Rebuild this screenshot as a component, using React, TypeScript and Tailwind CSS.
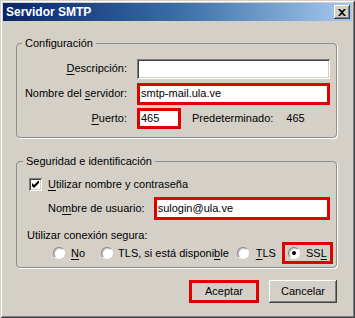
import React from "react";

const font = { fontFamily: '"Liberation Sans", Arial, sans-serif' };

// classic sunken / raised edges
const sunken = "shadow-[inset_1px_1px_0_#808080,inset_-1px_-1px_0_#ffffff,inset_2px_2px_0_#404040,inset_-2px_-2px_0_#d4d0c8]";
const raised = "shadow-[inset_-1px_-1px_0_#404040,inset_1px_1px_0_#ffffff,inset_-2px_-2px_0_#808080]";

function U({ children }: { children: React.ReactNode }) {
  return <span className="underline underline-offset-[2px]">{children}</span>;
}

function Radio({ checked }: { checked?: boolean }) {
  return (
    <span className="relative inline-block w-[12px] h-[12px] rounded-full bg-white border border-t-[#808080] border-l-[#808080] border-b-white border-r-white shadow-[inset_1px_1px_0_#c8c8c8]">
      {checked && <span className="absolute left-[3px] top-[3px] w-[4px] h-[4px] rounded-full bg-black" />}
    </span>
  );
}

function Field({ value, red, className }: { value?: string; red?: boolean; className?: string }) {
  return (
    <div
      className={
        "bg-white flex items-center text-[11px] text-black " +
        (red ? "border-[3px] border-[#e00000] pl-[1px] " : sunken + " pl-[4px] ") +
        (className ?? "")
      }
    >
      {value}
    </div>
  );
}

export default function App() {
  return (
    <div
      style={font}
      className="w-[355px] h-[318px] bg-[#d4d0c8] p-[3px] text-[11px] text-black leading-[13px] shadow-[inset_1px_1px_0_#d4d0c8,inset_-1px_-1px_0_#404040,inset_2px_2px_0_#ffffff,inset_-2px_-2px_0_#808080]"
    >
      {/* title bar */}
      <div className="h-[18px] flex items-center justify-between bg-gradient-to-r from-[#0a246a] via-[#3a6ea5] to-[#a6caf0] pl-[3px] pr-[2px]">
        <span className="text-white font-bold text-[12px]">Servidor SMTP</span>
        <div className={"w-[16px] h-[14px] bg-[#d4d0c8] flex items-center justify-center " + raised}>
          <svg width="8" height="7" viewBox="0 0 8 7">
            <path d="M0 0h2l2 2 2-2h2L5 3.5 8 7H6L4 5 2 7H0l3-3.5z" fill="#000" />
          </svg>
        </div>
      </div>

      <div className="flex flex-col pl-[13px] pt-[16px]">
        {/* Configuración */}
        <fieldset className="w-[321px] h-[101px] border border-[#8c8c8c] rounded-[4px] shadow-[1px_1px_0_#ffffff] pt-[8px] m-0">
          <legend className="ml-[5px] px-[3px]">Configuración</legend>
          <div className="flex flex-col gap-[4px]">
            <div className="flex items-center h-[21px]">
              <span className="w-[110px] text-right"><U>D</U>escripción:</span>
              <Field className="ml-[10px] w-[193px] h-[20px]" />
            </div>
            <div className="flex items-center h-[21px]">
              <span className="w-[110px] text-right">Nombre del <U>s</U>ervidor:</span>
              <Field red value="smtp-mail.ula.ve" className="ml-[10px] w-[193px] h-[22px]" />
            </div>
            <div className="flex items-center h-[21px]">
              <span className="w-[110px] text-right"><U>P</U>uerto:</span>
              <Field red value="465" className="ml-[10px] w-[44px] h-[21px]" />
              <span className="ml-[11px]">Predeterminado:</span>
              <span className="ml-[13px]">465</span>
            </div>
          </div>
        </fieldset>

        {/* Seguridad */}
        <fieldset className="mt-[17px] w-[321px] h-[113px] border border-[#8c8c8c] rounded-[4px] shadow-[1px_1px_0_#ffffff] pt-[9px] m-0">
          <legend className="ml-[6px] px-[3px]">Seguridad e identificación</legend>
          <div className="flex flex-col">
            <div className="flex items-center h-[15px] pl-[12px]">
              <span className={"w-[13px] h-[13px] bg-white flex items-center justify-center " + sunken}>
                <svg width="7" height="7" viewBox="0 0 7 7">
                  <path d="M0 2v3l2 2 5-5V-1L2 4z" fill="#000" />
                </svg>
              </span>
              <span className="ml-[6px]"><U>U</U>tilizar nombre y contraseña</span>
            </div>
            <div className="flex items-center h-[23px] mt-[5px] pl-[31px]">
              <span>No<U>m</U>bre de usuario:</span>
              <Field red value="sulogin@ula.ve" className="ml-[9px] w-[176px] h-[23px]" />
            </div>
            <div className="h-[14px] mt-[8px] pl-[10px] flex items-center">Utilizar conexión segura:</div>
            <div className="flex items-center h-[22px] pl-[36px]">
              <span className="flex items-center gap-[6px]"><Radio /><span><U>N</U>o</span></span>
              <span className="flex items-center gap-[5px] ml-[16px]"><Radio /><span>TLS, si está disponi<U>b</U>le</span></span>
              <span className="flex items-center gap-[7px] ml-[8px]"><Radio /><span><U>T</U>LS</span></span>
              <span className="flex items-center gap-[6px] ml-[6px] h-[22px] border-[3px] border-[#e00000] pl-[3px] pr-[3px]">
                <Radio checked /><span>SS<U>L</U></span>
              </span>
            </div>
          </div>
        </fieldset>

        {/* buttons */}
        <div className="flex justify-end gap-[10px] mt-[12px] w-[321px]">
          <button className="w-[70px] h-[23px] bg-[#d4d0c8] border-[3px] border-[#e00000] text-[11px]" style={font}>
            Aceptar
          </button>
          <button className={"w-[68px] h-[23px] bg-[#d4d0c8] text-[11px] " + raised} style={font}>
            Cancelar
          </button>
        </div>
      </div>
    </div>
  );
}
